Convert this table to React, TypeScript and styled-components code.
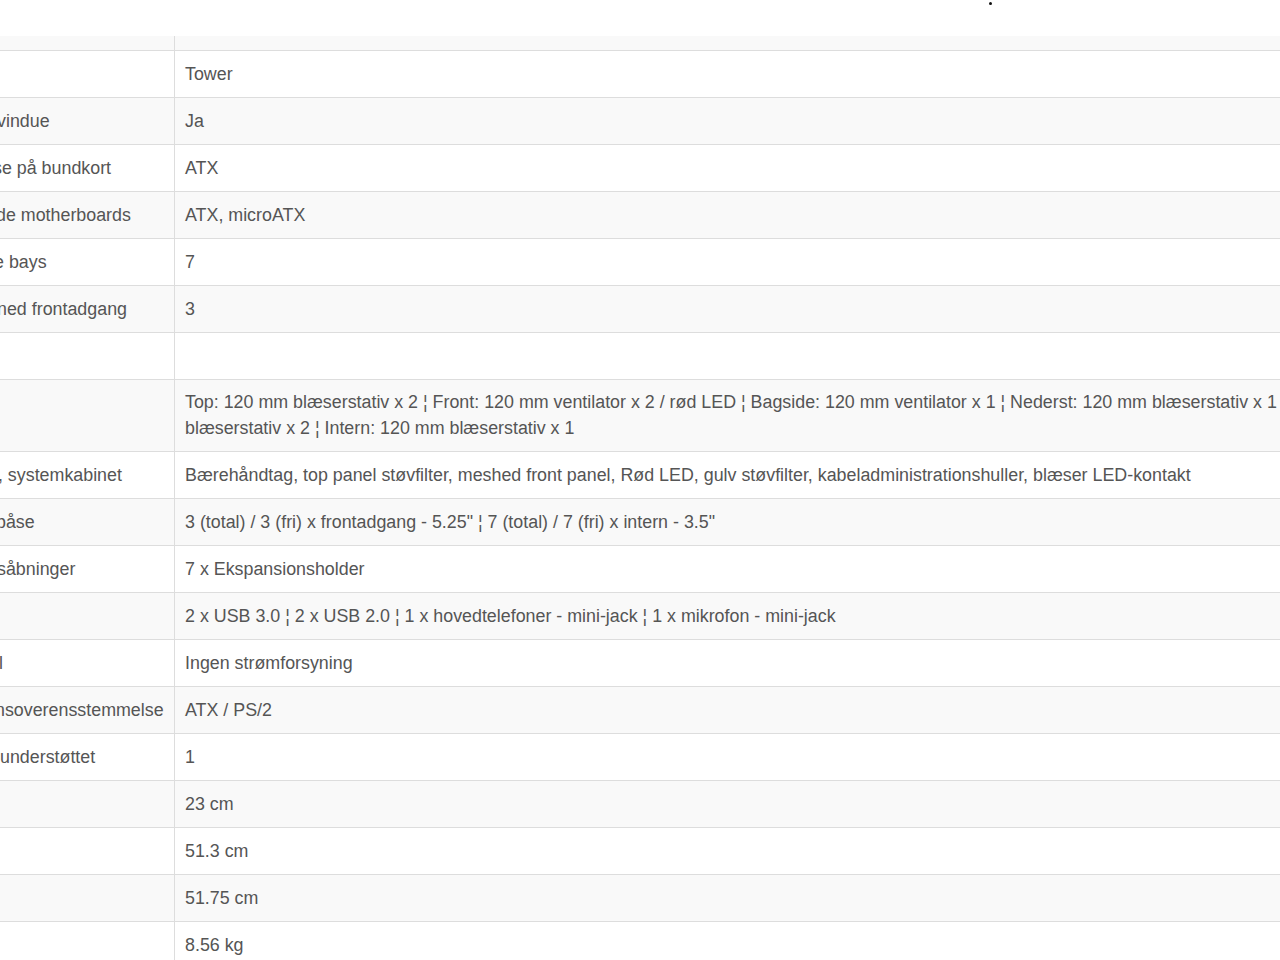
import React, { FC } from "react";
import styled, { createGlobalStyle } from "styled-components";

const GlobalStyle = createGlobalStyle`
  html, body {
    margin: 0;
    padding: 0;
    background: #fff;
    overflow: hidden;
  }
  body {
    font-family: "Liberation Sans", Arial, sans-serif;
  }
`;

const Page = styled.div`
  width: 1280px;
  height: 960px;
  overflow: hidden;
`;

const TopBar = styled.div`
  height: 36px;
  display: flex;
  align-items: flex-start;
  padding-left: 989px;
  box-sizing: border-box;
`;

const Dot = styled.span`
  width: 3px;
  height: 3px;
  margin-top: 2px;
  border-radius: 50%;
  background: #111;
`;

const Specs = styled.table`
  width: 1330px;
  table-layout: fixed;
  border-collapse: collapse;
  font-size: 17.85px;
  line-height: 26px;
  color: #555;
`;

const Row = styled.tr<{ $striped: boolean }>`
  background: ${(p) => (p.$striped ? "#f9f9f9" : "#fff")};
  border-top: 1px solid #dddddd;
`;

const ClippedRow = styled.tr`
  background: #f9f9f9;
  height: 14px;

  td {
    padding: 0;
  }
`;

const LabelCell = styled.td<{ $tight?: boolean }>`
  width: 174px;
  padding: ${(p) => (p.$tight ? "9.5px 0" : "10px 0")};
  border-right: 1px solid #dddddd;
  overflow: hidden;
  white-space: nowrap;
  vertical-align: top;
`;

// the page is scrolled sideways, so each label only shows its tail
const Label = styled.span<{ $cut: number }>`
  display: inline-block;
  margin-left: ${(p) => -p.$cut}px;
`;

const ValueCell = styled.td<{ $tight?: boolean }>`
  padding: ${(p) => (p.$tight ? "9.5px 10px" : "10px 10px")};
  white-space: nowrap;
  vertical-align: top;
`;

type Spec = { label: string; cut: number; value: React.ReactNode; twoLines?: boolean };

const specs: Spec[] = [
  { label: "", cut: 0, value: "Tower" },
  { label: "vindue", cut: 3, value: "Ja" },
  { label: "se på bundkort", cut: 7, value: "ATX" },
  { label: "de motherboards", cut: 4, value: "ATX, microATX" },
  { label: "e bays", cut: 6, value: "7" },
  { label: "ned frontadgang", cut: 3, value: "3" },
  { label: "", cut: 0, value: "" },
  {
    label: "",
    cut: 0,
    twoLines: true,
    value: (
      <>
        Top: 120 mm blæserstativ x 2 ¦ Front: 120 mm ventilator x 2 / rød LED ¦ Bagside: 120 mm ventilator x 1 ¦ Nederst: 120 mm blæserstativ x 1
        <br />
        blæserstativ x 2 ¦ Intern: 120 mm blæserstativ x 1
      </>
    ),
  },
  {
    label: "r, systemkabinet",
    cut: 7,
    value:
      "Bærehåndtag, top panel støvfilter, meshed front panel, Rød LED, gulv støvfilter, kabeladministrationshuller, blæser LED-kontakt",
  },
  { label: "båse", cut: 4, value: "3 (total) / 3 (fri) x frontadgang - 5.25\" ¦ 7 (total) / 7 (fri) x intern - 3.5\"" },
  { label: "såbninger", cut: 3, value: "7 x Ekspansionsholder" },
  { label: "", cut: 0, value: "2 x USB 3.0 ¦ 2 x USB 2.0 ¦ 1 x hovedtelefoner - mini-jack ¦ 1 x mikrofon - mini-jack" },
  { label: "l", cut: 1, value: "Ingen strømforsyning" },
  { label: "nsoverensstemmelse", cut: 5, value: "ATX / PS/2" },
  { label: "understøttet", cut: 0, value: "1" },
  { label: "", cut: 0, value: "23 cm" },
  { label: "", cut: 0, value: "51.3 cm" },
  { label: "", cut: 0, value: "51.75 cm" },
  { label: "", cut: 0, value: "8.56 kg" },
];

const App: FC = () => {
  return (
    <Page>
      <GlobalStyle />
      <TopBar>
        <Dot />
      </TopBar>
      <Specs>
        <tbody>
          <ClippedRow>
            <LabelCell />
            <ValueCell />
          </ClippedRow>
          {specs.map((s, i) => (
            <Row key={i} $striped={i % 2 === 1}>
              <LabelCell $tight={s.twoLines}>
                <Label $cut={s.cut}>{s.label}</Label>
              </LabelCell>
              <ValueCell $tight={s.twoLines}>{s.value}</ValueCell>
            </Row>
          ))}
        </tbody>
      </Specs>
    </Page>
  );
};

export default App;
